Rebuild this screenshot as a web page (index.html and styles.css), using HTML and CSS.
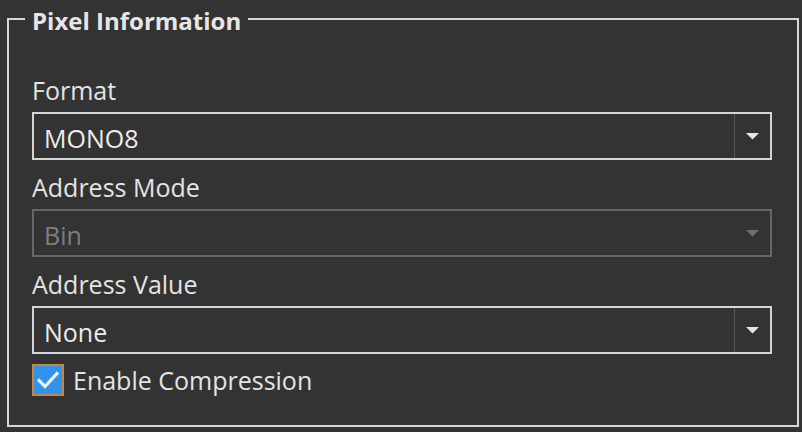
FILE: index.html
```html
<!DOCTYPE html>
<html>
<head>
<meta charset="utf-8">
<link rel="stylesheet" href="styles.css">
</head>
<body>
<fieldset class="group">
  <legend class="group-title">Pixel Information</legend>
  <div class="field">
    <div class="label">Format</div>
    <div class="combo">
      <span class="combo-text">MONO8</span>
      <span class="combo-btn"><svg width="13" height="7" viewBox="0 0 13 7"><path d="M0 0H13L6.5 6.5Z" fill="#e6e6e6"/></svg></span>
    </div>
  </div>
  <div class="field">
    <div class="label">Address Mode</div>
    <div class="combo disabled">
      <span class="combo-text">Bin</span>
      <span class="combo-btn"><svg width="13" height="7" viewBox="0 0 13 7"><path d="M0 0H13L6.5 6.5Z" fill="#6f6f6f"/></svg></span>
    </div>
  </div>
  <div class="field">
    <div class="label">Address Value</div>
    <div class="combo">
      <span class="combo-text">None</span>
      <span class="combo-btn"><svg width="13" height="7" viewBox="0 0 13 7"><path d="M0 0H13L6.5 6.5Z" fill="#e6e6e6"/></svg></span>
    </div>
  </div>
  <label class="check-row">
    <span class="check-box"><svg width="24" height="20" viewBox="0 0 24 20"><path d="M3 10.5L9 16.5L21 3.5" fill="none" stroke="#e8f3ff" stroke-width="3.2" stroke-linecap="square"/></svg></span>
    <span class="check-label">Enable Compression</span>
  </label>
</fieldset>
</body>
</html>
```
FILE: styles.css
```css
html, body {
  margin: 0;
  padding: 0;
  background: #333333;
}
body {
  width: 802px;
  height: 432px;
  overflow: hidden;
  font-family: "Open Sans", "DejaVu Sans", sans-serif;
  color: #e4e4e4;
}
.group {
  box-sizing: border-box;
  margin: 3px 0 0 7px;
  width: 792px;
  height: 424px;
  border: 2px solid #d6d6d6;
  padding: 0 25px 0 23px;
}
.group-title {
  margin-left: -7px;
  padding: 4px 7px 0;
  font-weight: 700;
  font-size: 24px;
  line-height: 28px;
  color: #e6e6e6;
}
.field {
  display: flex;
  flex-direction: column;
}
.label {
  height: 36px;
  line-height: 36px;
  padding-bottom: 4px;
  margin-top: 9px;
  font-size: 25px;
  color: #e4e4e4;
}
.field:first-of-type .label {
  margin-top: 37px;
}
.combo {
  box-sizing: border-box;
  height: 48px;
  border: 2px solid #d4d4d4;
  display: flex;
  align-items: stretch;
}
.combo-text {
  flex: 1;
  padding-left: 10px;
  padding-top: 3px;
  display: flex;
  align-items: center;
  font-size: 25px;
  color: #ececec;
}
.combo-btn {
  width: 35px;
  border-left: 1px solid #555555;
  display: flex;
  align-items: center;
  justify-content: center;
}
.combo.disabled {
  border-color: #666666;
}
.combo.disabled .combo-text {
  color: #7e7e7e;
}
.combo.disabled .combo-btn {
  border-left-color: transparent;
}
.check-row {
  display: flex;
  align-items: center;
  margin-top: 9px;
  gap: 9px;
}
.check-box {
  box-sizing: border-box;
  width: 32px;
  height: 32px;
  border: 2px solid #c8873c;
  background: #3193ea;
  display: flex;
  align-items: center;
  justify-content: center;
}
.check-label {
  font-size: 25px;
  color: #e4e4e4;
}
```
